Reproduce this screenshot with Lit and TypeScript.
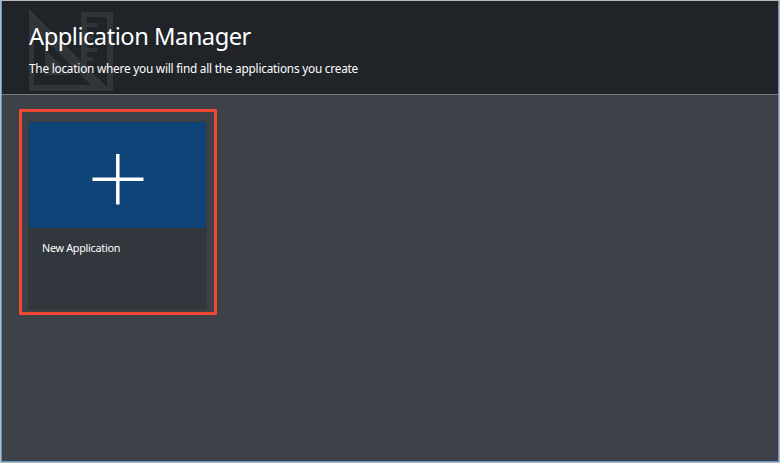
import { LitElement, html, css } from "lit";
import { customElement, property } from "lit/decorators.js";

@customElement("app-tile")
class AppTile extends LitElement {
  @property() label = "";
  static styles = css`
    :host { display: block; box-sizing: border-box; width: 198px; height: 206px; border: 3px solid #f14834; padding: 9px 6px; }
    .tile { box-sizing: border-box; width: 179px; height: 189px; border: 1px solid #393939; background: #31373d; }
    .face { height: 106px; background: #0f4479; }
    .face svg { display: block; }
    .label { margin: 12px 0 0 13px; font-size: 10.8px; line-height: 16px; letter-spacing: -0.28px; color: #fff; white-space: nowrap; }
  `;
  render() {
    return html`<div class="tile">
      <div class="face">
        <svg width="177" height="106" viewBox="0 0 177 106">
          <path d="M63.5 57.2H114.5M88.8 32V82.5" stroke="#fff" stroke-width="3.5" />
        </svg>
      </div>
      <div class="label">${this.label}</div>
    </div>`;
  }
}

@customElement("app-root")
class AppRoot extends LitElement {
  static styles = css`
    :host { display: block; box-sizing: border-box; width: 780px; height: 463px; overflow: hidden; border: 1px solid #b9b9b5; font-family: "Noto Sans", "Open Sans", sans-serif; }
    .window { box-sizing: border-box; height: 461px; border: 1px solid #6397cf; border-top: 0; background: #3e4148; }
    header { position: relative; box-sizing: border-box; height: 94px; padding: 18px 0 0 27px; background: #202429; border-bottom: 1px solid #777b7c; color: #fff; }
    .mark { position: absolute; left: 26px; top: 7px; }
    h1, p { position: relative; margin: 0; font-weight: 400; white-space: nowrap; }
    h1 { font-size: 23.7px; line-height: 34px; letter-spacing: -0.5px; }
    p { margin-top: 6px; font-size: 11.8px; line-height: 18px; letter-spacing: -0.22px; }
    main { padding: 14px 17px; }
  `;
  render() {
    return html`<div class="window">
      <header>
        <svg class="mark" width="86" height="84" viewBox="0 0 86 84" fill="#313539">
          <path fill-rule="evenodd" d="M1 1L83 83H1ZM6 20V77H63Z" />
          <path d="M17 41L42 67H17Z" />
          <path d="M53 4H85V83H75L79 78V9H59V15H69V19H59V28H65V32H59V40H69V44H59V49H65V53H59V61L53 55Z" />
        </svg>
        <h1>Application Manager</h1>
        <p>The location where you will find all the applications you create</p>
      </header>
      <main><app-tile label="New Application"></app-tile></main>
    </div>`;
  }
}
